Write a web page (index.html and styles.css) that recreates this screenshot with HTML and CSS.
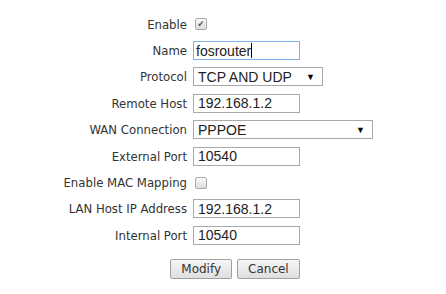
FILE: index.html
```html
<!DOCTYPE html>
<html lang="en">
<head>
    <meta charset="UTF-8">
    <title>Port Mapping</title>
    <link rel="stylesheet" href="styles.css">
</head>
<body>
    <form class="mapping-form">
        <div class="row">
            <label class="label">Enable</label>
            <div class="field"><span class="check checked">&#10004;</span></div>
        </div>
        <div class="row">
            <label class="label">Name</label>
            <div class="field"><span class="text-box focused">fosrouter<span class="caret"></span></span></div>
        </div>
        <div class="row">
            <label class="label">Protocol</label>
            <div class="field"><span class="select-box proto">TCP AND UDP<span class="arrow">&#9660;</span></span></div>
        </div>
        <div class="row">
            <label class="label">Remote Host</label>
            <div class="field"><span class="text-box">192.168.1.2</span></div>
        </div>
        <div class="row">
            <label class="label">WAN Connection</label>
            <div class="field"><span class="select-box wan">PPPOE<span class="arrow">&#9660;</span></span></div>
        </div>
        <div class="row">
            <label class="label">External Port</label>
            <div class="field"><span class="text-box">10540</span></div>
        </div>
        <div class="row">
            <label class="label">Enable MAC Mapping</label>
            <div class="field"><span class="check"></span></div>
        </div>
        <div class="row">
            <label class="label">LAN Host IP Address</label>
            <div class="field"><span class="text-box">192.168.1.2</span></div>
        </div>
        <div class="row">
            <label class="label">Internal Port</label>
            <div class="field"><span class="text-box">10540</span></div>
        </div>
        <div class="button-row">
            <button type="button" class="btn">Modify</button>
            <button type="button" class="btn">Cancel</button>
        </div>
    </form>
</body>
</html>
```

FILE: styles.css
```css
* {
    margin: 0;
    padding: 0;
    box-sizing: border-box;
}

body {
    background: #fff;
    font-family: 'DejaVu Sans Condensed', 'DejaVu Sans', Tahoma, sans-serif;
    font-size: 13px;
    color: #333;
}

.mapping-form {
    padding-top: 11px;
}

.row {
    display: grid;
    grid-template-columns: 187px auto;
    column-gap: 6px;
    align-items: center;
    height: 26.4px;
}

.label {
    text-align: right;
    white-space: nowrap;
}

.field {
    display: flex;
    align-items: center;
}

.text-box, .select-box {
    display: flex;
    align-items: center;
    height: 19px;
    border: 1px solid #a9a9a9;
    padding: 0 4px;
    font-family: 'Liberation Sans', Arial, sans-serif;
    font-size: 14px;
    color: #222;
}

.text-box {
    width: 107px;
}

.text-box.focused {
    border-color: #7eb4ea;
    padding-left: 2px;
}

.caret {
    display: inline-block;
    width: 1px;
    height: 15px;
    background: #000;
}

.select-box {
    justify-content: space-between;
    padding-right: 7px;
}

.proto {
    width: 130px;
}

.wan {
    width: 180px;
}

.arrow {
    font-size: 9px;
    color: #000;
}

.check {
    display: flex;
    align-items: center;
    justify-content: center;
    width: 12px;
    height: 12px;
    margin-left: 2px;
    border: 1px solid #aaa;
    border-radius: 2px;
    background: linear-gradient(#fafafa, #dcdcdc);
    font-size: 9px;
    color: #555;
}

.button-row {
    display: flex;
    justify-content: center;
    gap: 5px;
    margin-top: 10px;
    padding-left: 24px;
}

.btn {
    height: 20px;
    padding: 0 10px;
    border: 1px solid #a0a0a0;
    border-radius: 2px;
    background: linear-gradient(#f6f6f6, #dedede);
    font-family: 'DejaVu Sans', Tahoma, sans-serif;
    font-size: 12px;
    color: #333;
}
```
